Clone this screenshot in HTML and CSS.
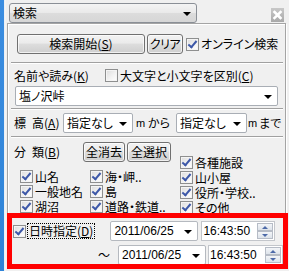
FILE: index.html
```html
<!DOCTYPE html>
<html lang="ja">
<head>
<meta charset="utf-8">
<link rel="stylesheet" href="styles.css">
</head>
<body>
<div class="app">
  <div class="strip"></div>
  <div class="edge"></div>
  <div class="panel">
    <div class="top">
      <div class="combo main-sel"><span class="val">検索</span><i class="arr"></i></div>
      <div class="close"><svg width="13" height="14" viewBox="0 0 13 14"><path d="M3.5 4 L9.5 10 M9.5 4 L3.5 10" stroke="#fff" stroke-width="2.6" stroke-linecap="square"/></svg></div>
    </div>
    <div class="group">
      <div class="row r-btns">
        <div class="btn b-search">検索開始(<u>S</u>)</div>
        <div class="btn b-clear">クリア</div>
        <div class="cb on"><span class="box"></span><span class="t">オンライン検索</span></div>
      </div>
      <div class="sep s1"></div>
      <div class="row r-name">
        <span class="lbl l-name">名前や読み(<u>K</u>)</span>
        <div class="cb"><span class="box"></span><span class="t">大文字と小文字を区別(<u>C</u>)</span></div>
      </div>
      <div class="combo name-combo"><span class="val">塩ノ沢峠</span><i class="arr"></i></div>
      <div class="sep s2"></div>
      <div class="row r-elev">
        <span class="lbl l-elev">標<span class="sp"></span>高(<u>A</u>)</span>
        <div class="combo sel-a"><span class="val">指定なし</span><i class="arr"></i></div>
        <span class="unit">m</span><span class="kara">から</span>
        <div class="combo sel-b"><span class="val">指定なし</span><i class="arr"></i></div>
        <span class="unit u2">m</span><span class="made">まで</span>
      </div>
      <div class="sep s3"></div>
      <div class="cls">
        <div class="cls-left">
          <div class="row r-cls">
            <span class="lbl l-cls">分<span class="sp"></span>類(<u>B</u>)</span>
            <div class="btn b-all-clear">全消去</div>
            <div class="btn b-all-sel">全選択</div>
          </div>
          <div class="cgrid">
            <div class="cb on"><span class="box"></span><span class="t">山名</span></div>
            <div class="cb on"><span class="box"></span><span class="t">海・岬..</span></div>
            <div class="cb on"><span class="box"></span><span class="t">一般地名</span></div>
            <div class="cb on"><span class="box"></span><span class="t">島</span></div>
            <div class="cb on"><span class="box"></span><span class="t">湖沼</span></div>
            <div class="cb on"><span class="box"></span><span class="t">道路・鉄道..</span></div>
          </div>
        </div>
        <div class="cls-right">
          <div class="cb on"><span class="box"></span><span class="t">各種施設</span></div>
          <div class="cb on"><span class="box"></span><span class="t">山小屋</span></div>
          <div class="cb on"><span class="box"></span><span class="t">役所・学校..</span></div>
          <div class="cb on"><span class="box"></span><span class="t">その他</span></div>
        </div>
      </div>
      <div class="date">
        <div class="row r-d1">
          <div class="cb on dcb"><span class="box"></span><span class="t focus">日時指定(<u>D</u>)</span></div>
          <div class="combo dsel d1"><span class="val num">2011/06/25</span><i class="arr"></i></div>
          <div class="tbox t1"><span class="num">16:43:50</span><span class="spin"><i class="up"></i><i class="dn"></i></span></div>
        </div>
        <div class="row r-d2">
          <span class="tilde">～</span>
          <div class="combo dsel d2"><span class="val num">2011/06/25</span><i class="arr"></i></div>
          <div class="tbox t2"><span class="num">16:43:50</span><span class="spin"><i class="up"></i><i class="dn"></i></span></div>
        </div>
      </div>
    </div>
    <div class="highlight"></div>
  </div>
</div>
</body>
</html>
```
FILE: styles.css
```css
* { box-sizing: border-box; }
html, body { margin: 0; padding: 0; }
body {
  width: 289px; height: 271px; overflow: hidden;
  font-family: "Noto Sans CJK JP", "Noto Sans", sans-serif;
  font-feature-settings: "palt";
  font-size: 12px; line-height: 14px; color: #000;
  background: #f0f0f0;
}
u { text-decoration: underline; text-underline-offset: 1px; }
.app { display: flex; height: 271px; }
.strip { width: 4px; background: linear-gradient(#3b8de0, #2f84d8); }
.edge { width: 2px; background: linear-gradient(90deg, #e9eef3, #f7f7f7); }
.panel { flex: 1; position: relative; background: #f0f0f0; }

.top { display: flex; padding: 3px 0 0 3px; height: 23px; }
.combo {
  position: relative; display: flex; align-items: center; white-space: nowrap;
  height: 20px; background: #fff; border: 1px solid #a9aeb5; border-radius: 2px;
  padding-left: 3px;
}
.combo .arr {
  position: absolute; right: 5px; top: 8px;
  width: 0; height: 0;
  border-left: 4px solid transparent; border-right: 4px solid transparent; border-top: 4px solid #000;
}
.main-sel {
  width: 188px; border-color: #8a8f96; border-radius: 3px;
  background: linear-gradient(#f4f4f4, #e9e9e9 50%, #dcdcdc 51%, #d6d6d6);
}
.close {
  width: 13px; height: 14px; margin: 5px 5px 0 auto;
  background: linear-gradient(#c8c8c8, #a9a9a9); display: flex;
}

.group {
  margin-left: 1px; width: 279px; height: 244px;
  border: 1px solid #a4a4a4; box-shadow: 1px 1px 0 #fff, inset 1px 1px 0 #fff;
  padding-top: 10px;
}
.row { display: flex; align-items: center; white-space: nowrap; }
.row > * { flex: none; }
.btn {
  height: 20px; display: flex; align-items: center; justify-content: center; white-space: nowrap;
  border: 1px solid #707070; border-radius: 3px;
  background: linear-gradient(#f2f2f2, #ebebeb 45%, #dddddd 50%, #cfcfcf);
  box-shadow: inset 0 0 0 1px rgba(255,255,255,0.7);
}
.b-search { margin-left: 9px; width: 128px; }
.b-clear { margin-left: 2px; width: 36px; letter-spacing: -0.5px; }
.r-btns .cb { margin-left: 3px; }

.cb { display: flex; align-items: center; height: 15px; white-space: nowrap; }
.cb .box {
  position: relative; flex: none;
  width: 13px; height: 13px; border: 1px solid #8e8f8f;
  background: linear-gradient(135deg, #dcdcdc, #f4f4f4 60%, #fff);
  box-shadow: inset 0 0 0 1px #f4f4f4;
}
.cb.on .box::after {
  content: ""; position: absolute; left: 3px; top: 0px;
  width: 3px; height: 7px;
  border-right: 2px solid #3d58a8; border-bottom: 2px solid #3d58a8;
  transform: rotate(40deg);
}
.cb .t { margin-left: 2px; }

.sep { height: 2px; border-top: 1px solid #a0a0a0; border-bottom: 1px solid #fff; margin-left: 3px; width: 272px; }
.s1 { margin-top: 8px; }
.r-name { margin-top: 4px; height: 15px; }
.l-name { margin-left: 6px; width: 91px; }
.name-combo { margin: 3px 0 0 7px; width: 263px; }
.s2 { margin-top: 2px; }
.r-elev { margin-top: 2px; height: 21px; }
.lbl { white-space: nowrap; }
.sp { display: inline-block; width: 6px; }
.l-elev { margin-left: 6px; width: 49px; }
.sel-a { width: 70px; }
.sel-b { width: 71px; }
.unit { margin-left: 3px; width: 9px; font-family: "Liberation Sans", sans-serif; font-size: 11px; }
.kara { margin-left: 3px; width: 28px; }
.u2 { margin-left: 1px; }
.made { margin-left: 2px; }
.s3 { margin-top: 3px; }

.cls { display: flex; margin-top: 4px; }
.cls-left { width: 172px; }
.r-cls { height: 20px; }
.l-cls { margin-left: 6px; width: 69px; }
.b-all-clear { width: 42px; }
.b-all-sel { width: 44px; margin-left: 2px; }
.cgrid {
  display: grid; grid-template-columns: 70px 90px; grid-auto-rows: 15px;
  margin: 7px 0 0 12px;
}
.cls-right { display: flex; flex-direction: column; margin-top: 13px; }
.cls-right .cb { height: 15px; }

.date { margin-top: 6px; }
.r-d1 { height: 20px; }
.dcb { margin-left: 5px; }
.focus { outline: 1px dotted #000; outline-offset: 0px; padding: 0 1px; }
.num { font-family: "Liberation Sans", "DejaVu Sans", sans-serif; font-size: 12px; }
.dsel { width: 88px; border-color: #b5b9bf; }
.d1 { margin-left: 16px; }
.tbox {
  position: relative; height: 20px; display: flex; align-items: center;
  background: #fff; border: 1px solid #c3c6cb; padding-left: 1px;
}
.t1 { width: 74px; margin-left: 3px; }
.t2 { width: 75px; margin-left: 2px; }
.spin {
  position: absolute; right: 1px; top: 1px; width: 16px; height: 16px;
  display: flex; flex-direction: column;
}
.spin i {
  position: relative; flex: 1; border: 1px solid #b6bcc6;
  background: linear-gradient(#f3f5f8, #dde3ea);
}
.spin i::after {
  content: ""; position: absolute; left: 4px; top: 2px; width: 0; height: 0;
  border-left: 3px solid transparent; border-right: 3px solid transparent;
}
.spin .up::after { border-bottom: 3px solid #4d6aa8; }
.spin .dn::after { border-top: 3px solid #4d6aa8; }
.r-d2 { margin-top: 4px; height: 20px; }
.tilde { margin-left: 90px; width: 20px; }
.d2 { margin-left: 0; }

.highlight {
  position: absolute; left: 1px; top: 213px; width: 281px; height: 56px;
  border: 5px solid #ff0000;
}
```
